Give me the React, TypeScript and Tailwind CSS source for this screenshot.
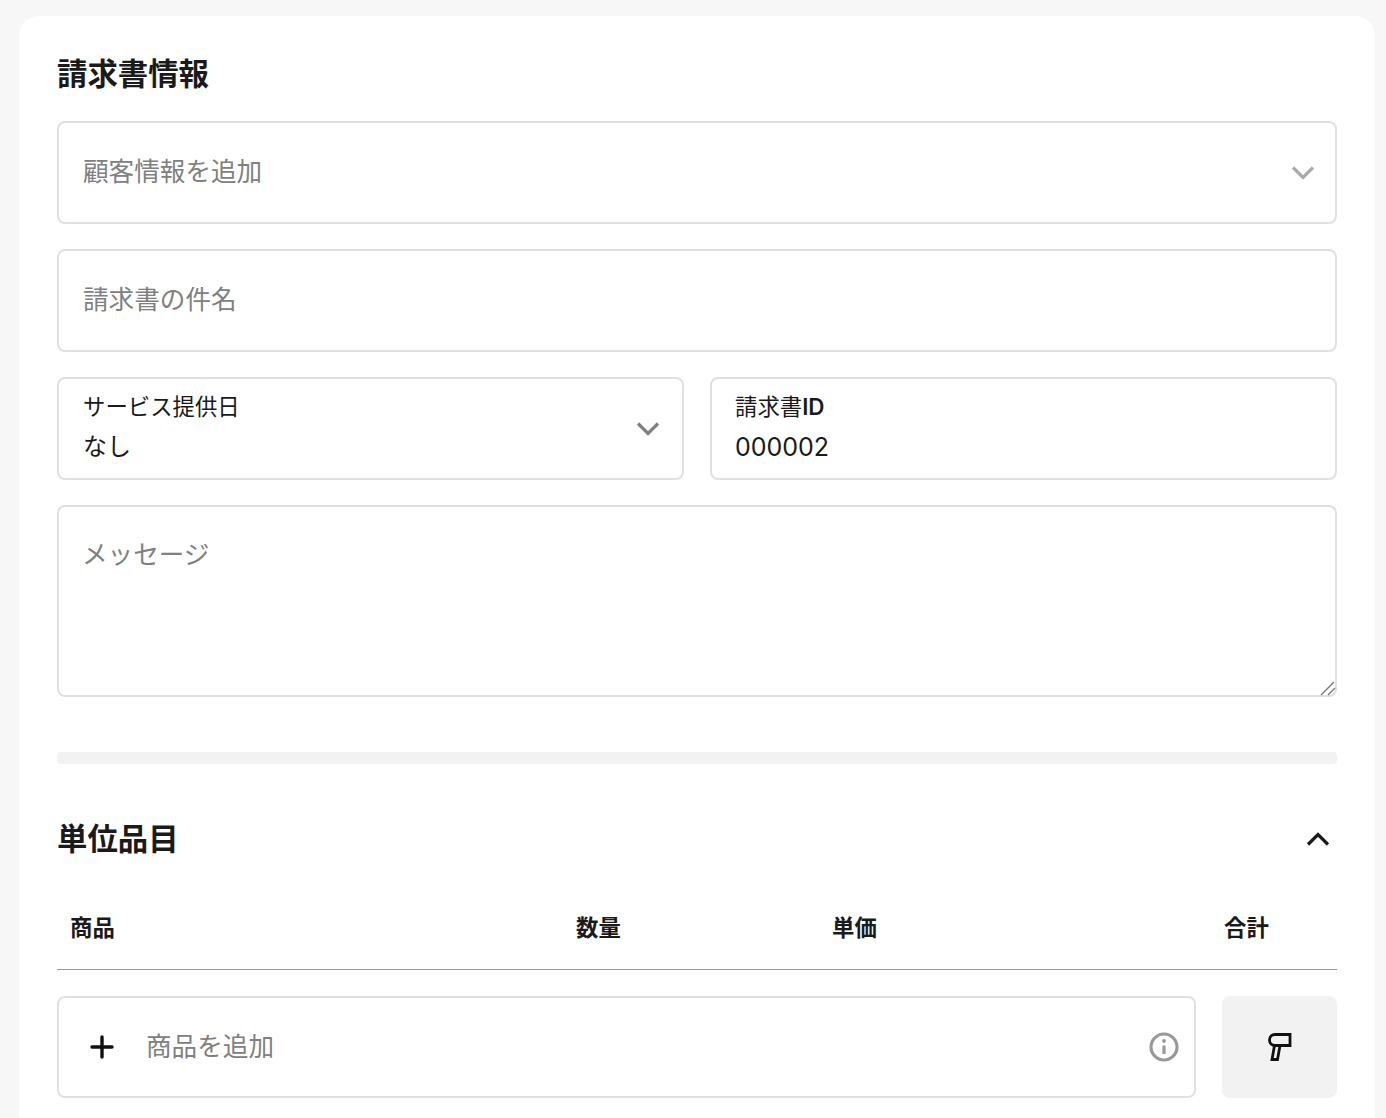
const font = "font-['Inter','Noto_Sans_CJK_JP',sans-serif]";

const border = 'rounded-lg border-2 border-[#e0e0e0]';

function Chevron({ className, up }: { className: string; up?: boolean }) {
  return (
    <svg width="24" height="14" viewBox="0 0 24 14" fill="none" stroke="currentColor" strokeWidth="3.2" className={className}>
      <path d={up ? 'M2 12.5 12 2.5l10 10' : 'M2 1.5l10 10 10-10'} />
    </svg>
  );
}

function App() {
  return (
    <div className={`h-[1118px] overflow-hidden bg-[#f7f7f7] pl-[19px] pr-[11px] pt-4 ${font}`}>
      <div className="rounded-t-[20px] bg-white px-[38px] pt-[38px] pb-10">
        <h2 className="text-[30.4px] leading-10 font-bold text-[#1a1a1a]">請求書情報</h2>
        <div className="mt-[27px] flex flex-col gap-[25px]">
          <div className={`flex h-[103px] items-center justify-between pl-[24px] pr-[20px] ${border}`}>
            <span className="text-[25.6px] text-[#808080]">顧客情報を追加</span>
            <Chevron className="text-[#ababab]" />
          </div>
          <div className={`flex h-[103px] items-center px-[24px] ${border}`}>
            <input placeholder="請求書の件名" className="w-full text-[25.6px] outline-none placeholder:text-[#808080]" />
          </div>
          <div className="flex gap-[26px]">
            <div className={`flex h-[103px] w-[627px] items-center justify-between pl-[24px] pr-[22px] ${border}`}>
              <div className="flex flex-col">
                <span className="text-[22.4px] leading-7 text-[#1a1a1a]">サービス提供日</span>
                <span className="mt-2 text-[24px] leading-9 text-[#1a1a1a]">なし</span>
              </div>
              <Chevron className="text-[#808080]" />
            </div>
            <div className={`flex h-[103px] flex-1 flex-col justify-center px-[23px] ${border}`}>
              <span className="text-[22.4px] leading-7 text-[#1a1a1a]">
                請求書<span className="font-semibold">ID</span>
              </span>
              <span className="mt-2 text-[25px] leading-9 text-[#1a1a1a]">000002</span>
            </div>
          </div>
          <div className="relative">
            <textarea
              placeholder="メッセージ"
              className={`block h-[192px] w-full resize-none pl-[23px] pr-[24px] pt-[29px] text-[25.6px] outline-none placeholder:text-[#808080] ${border}`}
            />
            <svg width="16" height="16" viewBox="0 0 16 16" stroke="#777" strokeWidth="1.4" className="absolute right-[1px] bottom-[1px]">
              <path d="M1 15 14 2M8 15l7-7" />
            </svg>
          </div>
        </div>
        <div className="mt-[55px] h-3 rounded-sm bg-[#f2f2f2]" />
        <div className="mt-[55px] flex items-center justify-between">
          <h2 className="text-[30.4px] leading-10 font-bold text-[#1a1a1a]">単位品目</h2>
          <Chevron up className="mr-[7px] text-[#1a1a1a]" />
        </div>
        <div className="mt-[52px] flex h-[59px] border-b border-[#999] pl-[13px] text-[22.4px] font-bold text-[#1a1a1a]">
          <span className="w-[506px]">商品</span>
          <span className="w-[256px]">数量</span>
          <span className="w-[392px]">単価</span>
          <span>合計</span>
        </div>
        <div className="mt-[26px] flex gap-[26px]">
          <div className={`flex h-[102px] flex-1 items-center pl-[31px] pr-[15px] ${border}`}>
            <svg width="24" height="24" viewBox="0 0 24 24" stroke="#111" strokeWidth="3.4" strokeLinecap="round">
              <path d="M12 2v20M2 12h20" />
            </svg>
            <span className="ml-[32px] flex-1 text-[25.6px] text-[#808080]">商品を追加</span>
            <svg width="30" height="30" viewBox="0 0 30 30" fill="none">
              <circle cx="15" cy="15" r="13" stroke="#999" strokeWidth="3.2" />
              <path d="M15 13.5V22" stroke="#999" strokeWidth="3.2" />
              <circle cx="15" cy="9" r="1.9" fill="#999" />
            </svg>
          </div>
          <div className="flex h-[102px] w-[115px] items-center justify-center rounded-lg bg-[#f2f2f2]">
            <svg width="24" height="28" viewBox="0 0 24 28" fill="none" stroke="#111" strokeWidth="2.8">
              <path d="M22 1.5H7a5.5 5.5 0 0 0 0 11h15zM6.5 12.5 4 26.5h5.5L12 12.5" />
            </svg>
          </div>
        </div>
      </div>
    </div>
  );
}

export default App;
